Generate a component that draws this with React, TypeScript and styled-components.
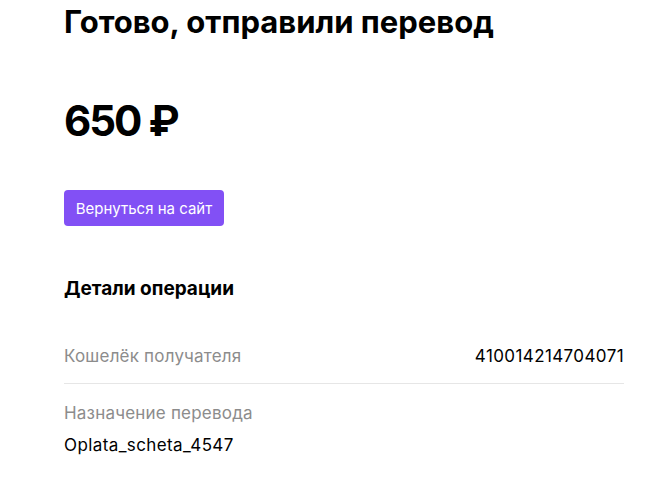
import React from "react";
import styled, { createGlobalStyle } from "styled-components";

const Global = createGlobalStyle`
  html, body { margin: 0; padding: 0; background: #fff; }
  body { font-family: Inter, "Noto Sans", sans-serif; color: #000; }
`;

const Page = styled.main`
  width: 560px;
  padding: 4px 38px 0 64px;
  display: flex;
  flex-direction: column;
`;

const Title = styled.h1`
  margin: 0;
  font-size: 31px;
  line-height: 36px;
  font-weight: 700;
  letter-spacing: 0;
`;

const Amount = styled.div`
  margin-top: 56px;
  font-size: 42px;
  line-height: 50px;
  font-weight: 700;
  letter-spacing: -2px;
`;

const Button = styled.button`
  margin-top: 44px;
  align-self: flex-start;
  width: 160px;
  height: 36px;
  border: none;
  border-radius: 4px;
  background: #8250f5;
  color: #fff;
  font-family: inherit;
  font-size: 15px;
  padding: 0;
`;

const SectionTitle = styled.h2`
  margin: 51px 0 0;
  font-size: 19px;
  line-height: 24px;
  font-weight: 700;
`;

const Row = styled.div<{ $stacked?: boolean; $divider?: boolean }>`
  display: flex;
  flex-direction: ${(p) => (p.$stacked ? "column" : "row")};
  justify-content: space-between;
  gap: ${(p) => (p.$stacked ? "10px" : "0")};
  padding: 18px 0 16px;
  border-bottom: ${(p) => (p.$divider ? "1px solid #e6e6e6" : "none")};
`;

const Label = styled.span`
  font-size: 17px;
  line-height: 22px;
  color: #8c8c8c;
  letter-spacing: 0.2px;
`;

const Value = styled.span`
  font-size: 17px;
  line-height: 22px;
  color: #000;
  letter-spacing: 0.4px;
`;

const Details = styled.section`
  margin-top: 26px;
`;

export default function App() {
  return (
    <>
      <Global />
      <Page>
        <Title>Готово, отправили перевод</Title>
        <Amount>650 ₽</Amount>
        <Button>Вернуться на сайт</Button>
        <SectionTitle>Детали операции</SectionTitle>
        <Details>
          <Row $divider>
            <Label>Кошелёк получателя</Label>
            <Value>410014214704071</Value>
          </Row>
          <Row $stacked>
            <Label>Назначение перевода</Label>
            <Value>Oplata_scheta_4547</Value>
          </Row>
        </Details>
      </Page>
    </>
  );
}
